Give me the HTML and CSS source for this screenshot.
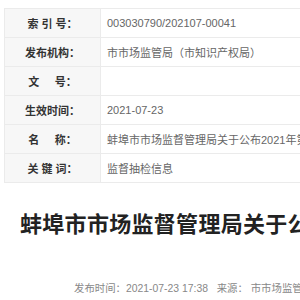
FILE: index.html
```html
<!doctype html>
<html>
 <head>
	<meta charset="UTF-8">
	<title>信息公开</title>
	<link rel="stylesheet" href="styles.css">
 </head>
 <body>
	<div class="page">
		<table class="info">
			<tr>
				<td class="lab">索&nbsp;引&nbsp;号：</td>
				<td>003030790/202107-00041</td>
			</tr>
			<tr>
				<td class="lab">发布机构：</td>
				<td>市市场监管局（市知识产权局）</td>
			</tr>
			<tr>
				<td class="lab">文&nbsp;&nbsp;&nbsp;&nbsp;&nbsp;号：</td>
				<td></td>
			</tr>
			<tr>
				<td class="lab">生效时间：</td>
				<td>2021-07-23</td>
			</tr>
			<tr>
				<td class="lab">名&nbsp;&nbsp;&nbsp;&nbsp;&nbsp;称：</td>
				<td>蚌埠市市场监督管理局关于公布2021年第21期食品安全监督抽检信息的通告</td>
			</tr>
			<tr>
				<td class="lab">关&nbsp;键&nbsp;词：</td>
				<td>监督抽检信息</td>
			</tr>
		</table>
		<h1 class="title">蚌埠市市场监督管理局关于公布2021年第21期食品安全监督抽检信息的通告</h1>
		<div class="meta">发布时间：2021-07-23 17:38&nbsp;&nbsp;&nbsp;来源：&nbsp;市市场监管局&nbsp;&nbsp;&nbsp;&nbsp;浏览次数：</div>
	</div>
 </body>
</html>
```

FILE: styles.css
```css
body{margin:0;overflow:hidden;font-family:"Liberation Sans","Noto Sans CJK SC",sans-serif;background:#fff}
.page{width:640px;padding:8px 0 0 4px}
/*信息表格*/
.info{width:620px;border-collapse:collapse;font-size:11px;color:#666}
.info td{height:28px;border:1px solid #ebebeb;padding:0 0 0 6px;white-space:nowrap}
.info td.lab{width:95px;padding:0;text-align:center;background:#f7f7f7;color:#333;font-weight:bold}
/*标题*/
.title{margin:27px 0 0 16px;font-size:22px;letter-spacing:0.3px;line-height:30px;color:#222;white-space:nowrap}
.meta{margin:40px 0 0 70px;font-size:10.4px;color:#888;white-space:nowrap}
```
